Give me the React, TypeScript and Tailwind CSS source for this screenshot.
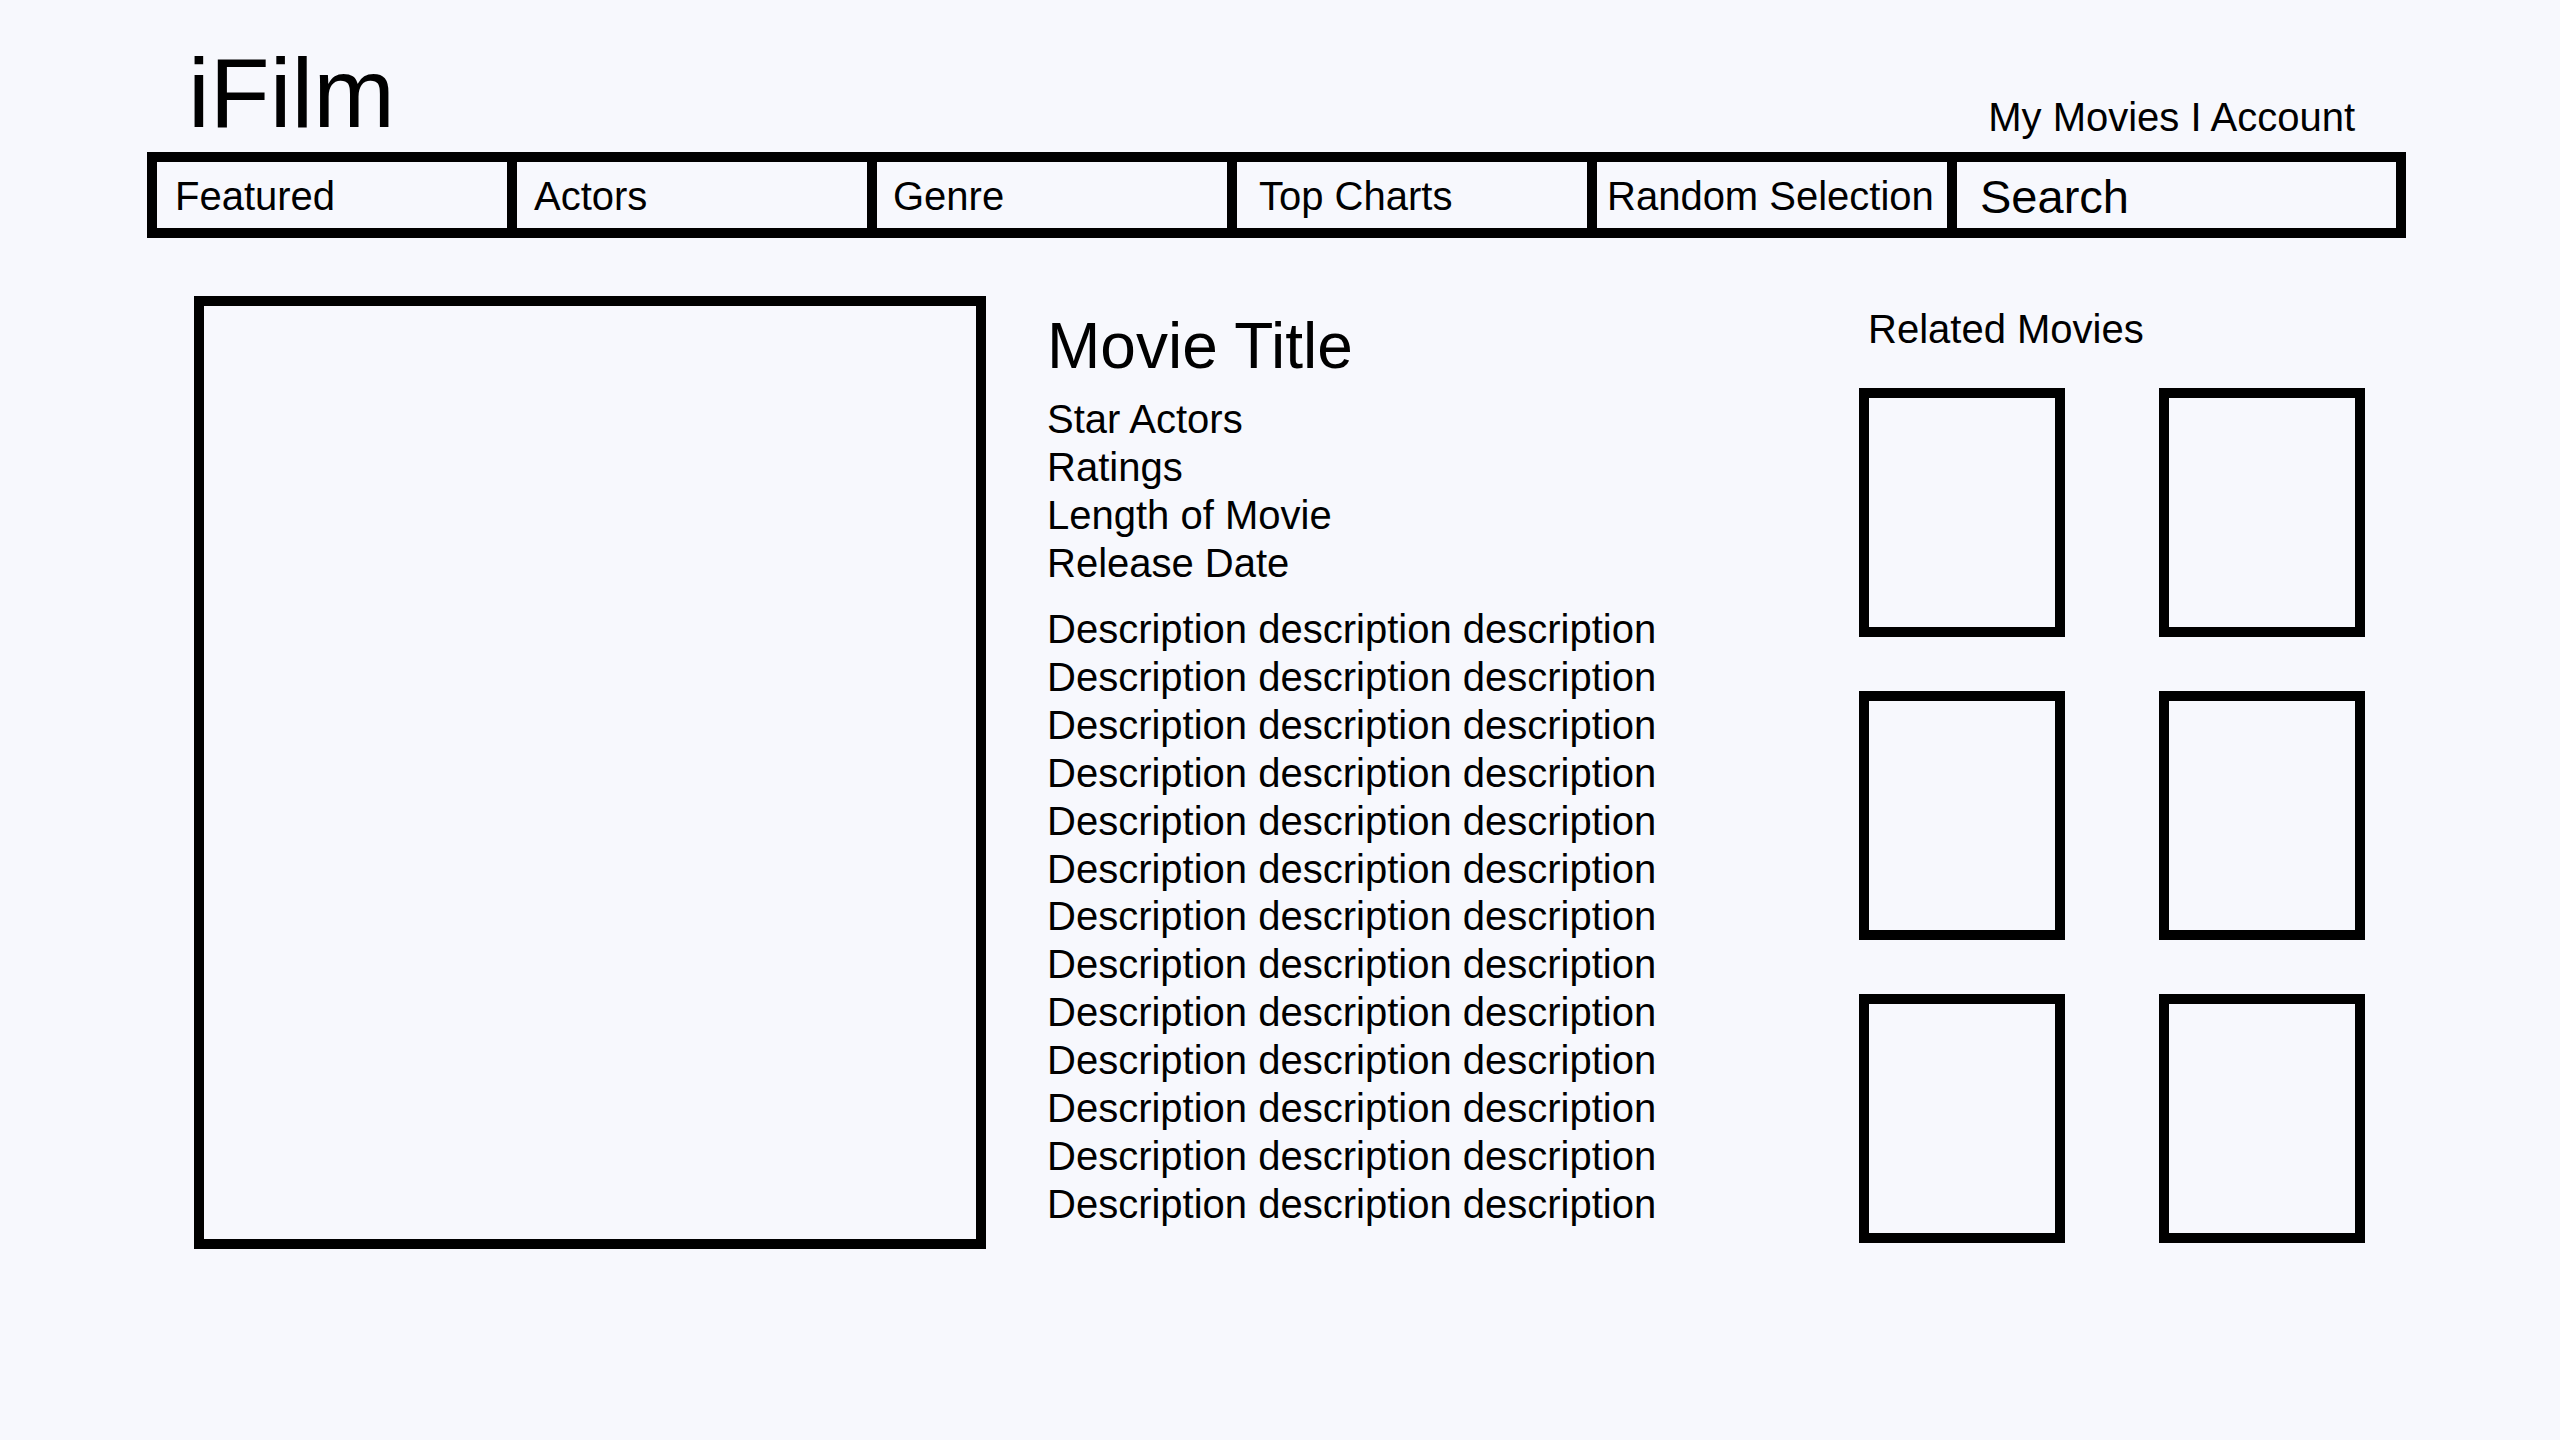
const NAV_ITEMS = [
  { label: "Featured", pad: "pl-[18px]" },
  { label: "Actors", pad: "pl-[17px]" },
  { label: "Genre", pad: "pl-[16px]" },
  { label: "Top Charts", pad: "pl-[22px]" },
  { label: "Random Selection", pad: "pl-[10px]" },
];

const DETAILS = ["Star Actors", "Ratings", "Length of Movie", "Release Date"];

const DESCRIPTION = Array.from({ length: 13 }, () => "Description description description");

function Header() {
  return (
    <header className="flex items-end justify-between">
      <h1 className="pl-[41px] text-[98px] leading-none font-normal">iFilm</h1>
      <nav className="mb-[5px] pr-[51px] text-[40px] leading-none">My Movies I Account</nav>
    </header>
  );
}

function NavBar() {
  return (
    <div className="mt-[10px] flex h-[86px]">
      {NAV_ITEMS.map((item) => (
        <div
          key={item.label}
          className={`flex w-[360px] shrink-0 items-center border-y-[10px] border-l-[10px] border-black pt-[2px] text-[40px] leading-none ${item.pad}`}
        >
          {item.label}
        </div>
      ))}
      <div className="flex flex-1 items-center border-[10px] border-black pl-[23px] pt-[2px] text-[47px] leading-none">
        Search
      </div>
    </div>
  );
}

function MovieInfo() {
  return (
    <section className="ml-[61px] w-[812px] shrink-0 pt-[18px]">
      <h2 className="text-[64px] leading-none font-normal">Movie Title</h2>
      <ul className="mt-[17px] text-[40px] leading-[48px]">
        {DETAILS.map((d) => (
          <li key={d}>{d}</li>
        ))}
      </ul>
      <div className="mt-[19px] text-[40px] leading-[47.9px]">
        {DESCRIPTION.map((line, i) => (
          <p key={i}>{line}</p>
        ))}
      </div>
    </section>
  );
}

function RelatedMovies() {
  return (
    <aside className="pt-[13px]">
      <h3 className="pl-[9px] text-[40px] leading-none font-normal">Related Movies</h3>
      <div className="mt-[39px] grid grid-cols-[206px_206px] gap-x-[94px] gap-y-[54px]">
        {Array.from({ length: 6 }, (_, i) => (
          <div key={i} className="h-[249px] border-[10px] border-black" />
        ))}
      </div>
    </aside>
  );
}

export default function App() {
  return (
    <div className="min-h-screen bg-[#f7f8fd] pt-[44px] text-black [font-family:'Liberation_Sans',Arial,sans-serif]">
      <div className="pl-[147px] pr-[154px]">
        <Header />
        <NavBar />
        <main className="mt-[58px] flex">
          <div className="ml-[47px] h-[953px] w-[792px] shrink-0 border-[10px] border-black" />
          <MovieInfo />
          <RelatedMovies />
        </main>
      </div>
    </div>
  );
}
